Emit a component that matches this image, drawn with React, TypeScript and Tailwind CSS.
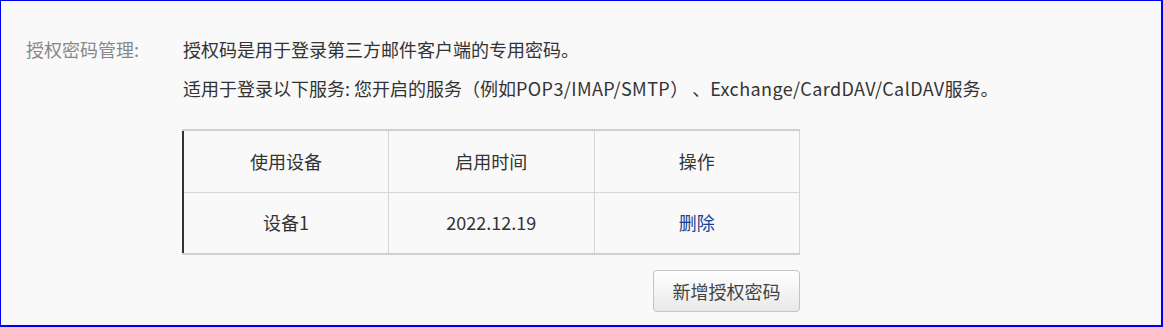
import React from 'react';

const rows = [{ device: '设备1', time: '2022.12.19' }];

export default function App() {
  return (
    <div
      className="w-[1163px] h-[327px] bg-[#f9f9f9] border-l border-t border-r-2 border-b-2 border-[#0000ee] text-[#333] text-[18px]"
      style={{ fontFamily: '"Noto Sans CJK SC", "Noto Sans", sans-serif' }}
    >
      <div className="flex pt-[35px]">
        <div className="w-[181px] pl-[25px] text-[#888] leading-[26px]">授权密码管理:</div>
        <div className="flex flex-col">
          <p className="leading-[26px] pl-px">授权码是用于登录第三方邮件客户端的专用密码。</p>
          <p className="leading-[26px] mt-[13px] pl-px">
            适用于登录以下服务: 您开启的服务（例如<span className="tracking-[0.4px]">POP3/IMAP/SMTP</span>）&nbsp;、<span className="tracking-[0.4px]">Exchange/CardDAV/CalDAV</span>服务。
          </p>

          {/* devices table */}
          <table className="mt-[28px] w-[618px] border-collapse table-fixed text-center">
            <thead>
              <tr className="h-[62px]">
                <th className="font-normal border-t-2 border-t-[#d0d0d0] border-l-2 border-l-[#333] border-r border-[#d6d6d6]">使用设备</th>
                <th className="font-normal border-t-2 border-t-[#d0d0d0] border-r border-[#d6d6d6]">启用时间</th>
                <th className="font-normal border-t-2 border-t-[#d0d0d0] border-r border-[#d6d6d6]">操作</th>
              </tr>
            </thead>
            <tbody>
              {rows.map(r => (
                <tr key={r.device} className="h-[62px]">
                  <td className="border-t border-t-[#d6d6d6] border-b-2 border-b-[#d0d0d0] border-l-2 border-l-[#333] border-r border-r-[#d6d6d6]">{r.device}</td>
                  <td className="border-t border-t-[#d6d6d6] border-b-2 border-b-[#d0d0d0] border-r border-r-[#d6d6d6]">{r.time}</td>
                  <td className="border-t border-t-[#d6d6d6] border-b-2 border-b-[#d0d0d0] border-r border-r-[#d6d6d6]">
                    <a className="text-[#1a3f95] cursor-pointer">删除</a>
                  </td>
                </tr>
              ))}
            </tbody>
          </table>

          <div className="flex justify-end w-[618px] mt-[15px]">
            <button className="w-[147px] h-[42px] rounded-[4px] border border-[#c4c4c4] bg-gradient-to-b from-white to-[#e9e9e9] text-[#444] text-[18px]">
              新增授权密码
            </button>
          </div>
        </div>
      </div>
    </div>
  );
}
